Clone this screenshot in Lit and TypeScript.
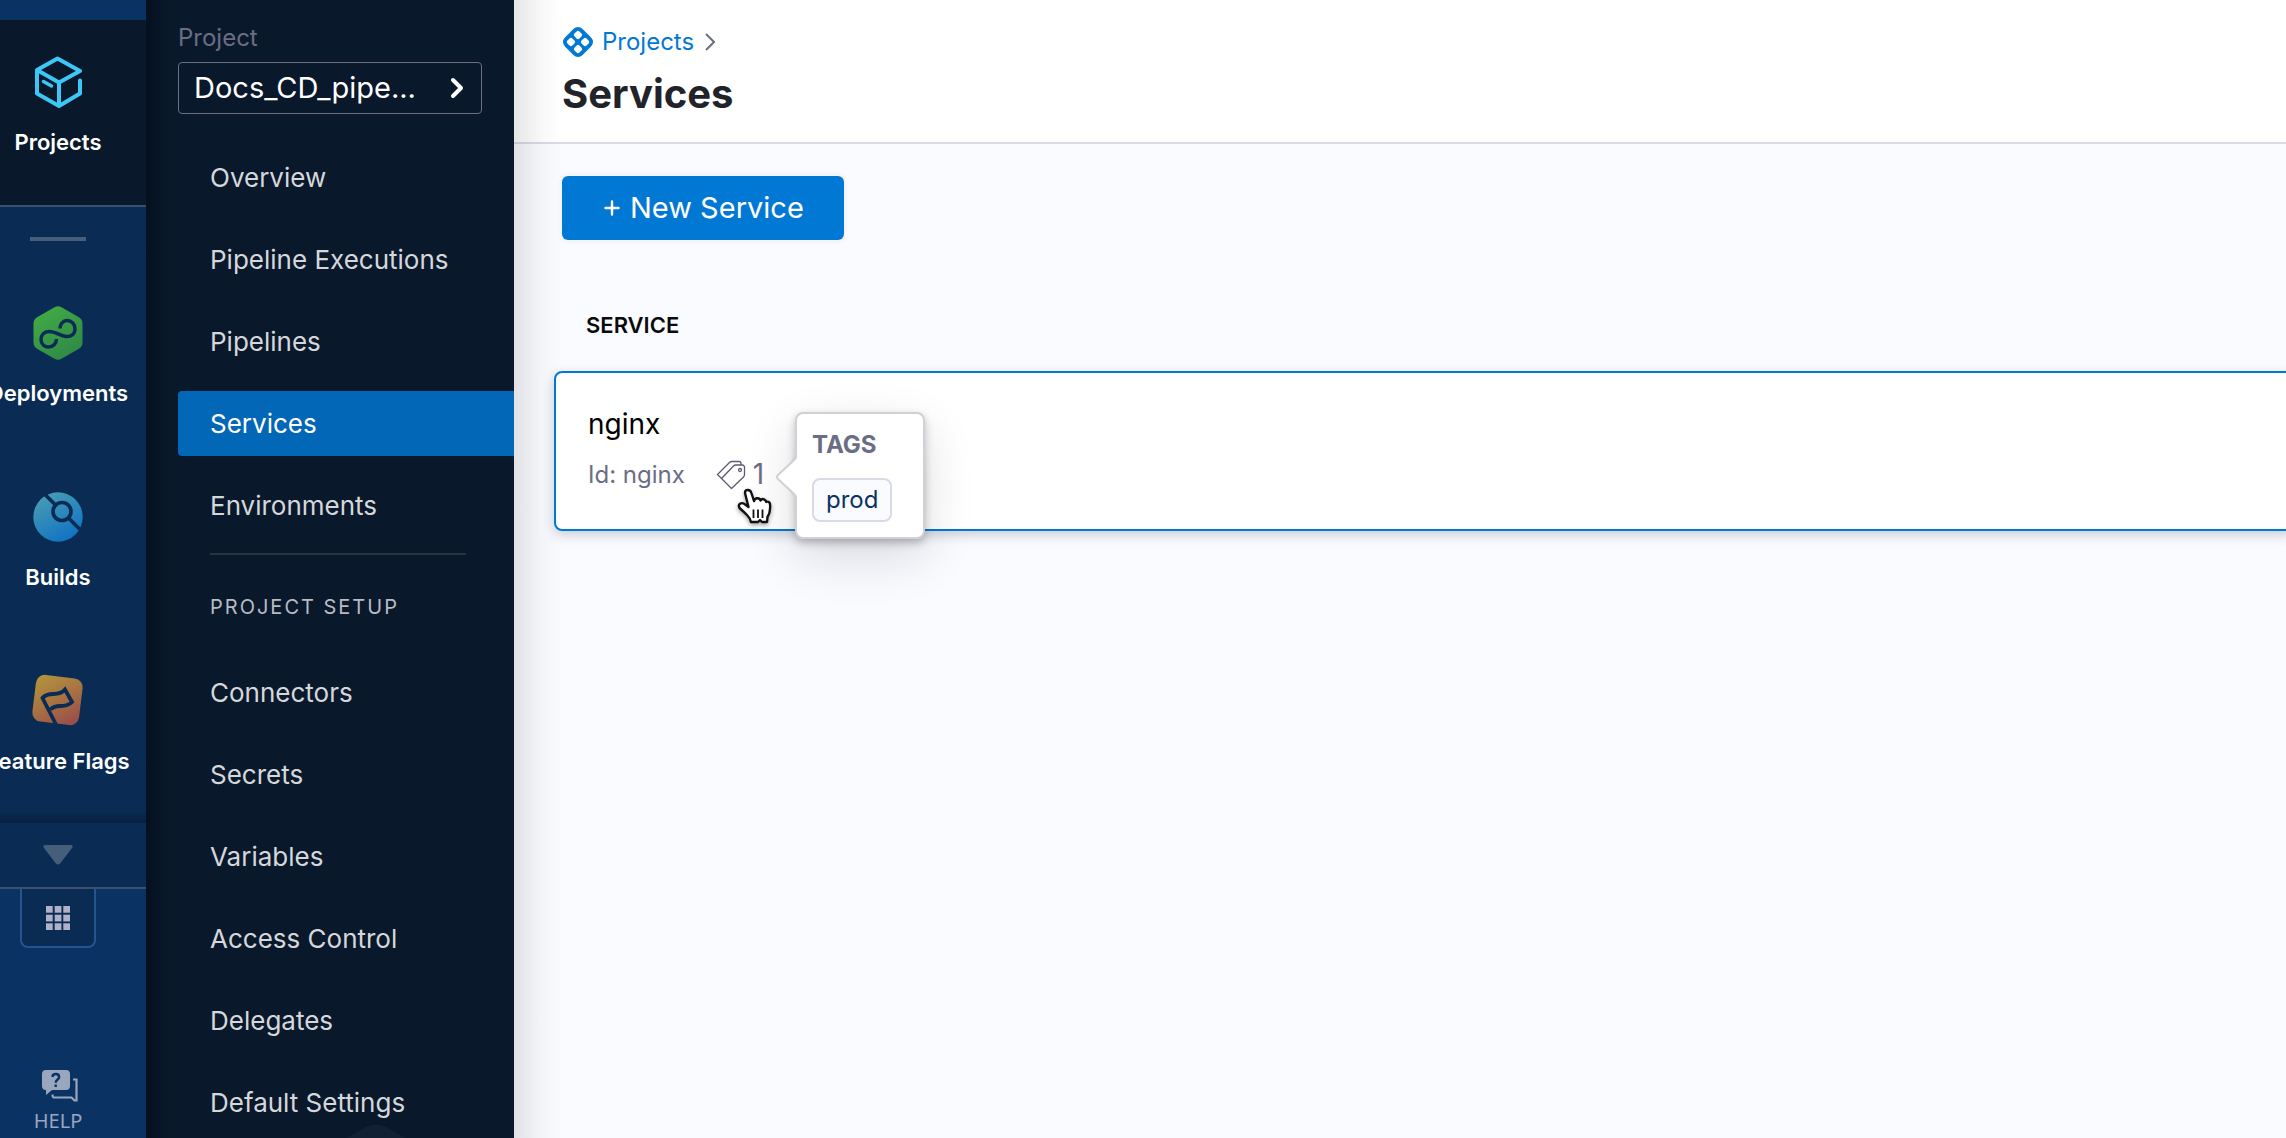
import { LitElement, html, svg, css, nothing } from "lit";
import { customElement } from "lit/decorators.js";
import { classMap } from "lit/directives/class-map.js";

const cubeIcon = html`<svg class="icon" viewBox="0 0 56 56" fill="none" stroke="#3dc7f6" stroke-width="4" stroke-linejoin="round" stroke-linecap="round" aria-hidden="true">
  <path d="M50 17 27.500 4.500 7 16v23.500L29 52l21-12.500V26.500M50 17 29 28.500 7 16M29 28.500V52"/>
  <path d="M13.500 27.500 21.500 32" stroke-width="3.500"/>
</svg>`;

const deployIcon = html`<svg class="icon" viewBox="0 0 56 56" aria-hidden="true">
  <defs><linearGradient id="g" x1="0.2" y1="0" x2="0.8" y2="1"><stop offset="0" stop-color="#42ab45"/><stop offset="1" stop-color="#2f8747"/></linearGradient></defs>
  <path fill="url(#g)" d="M24.500 2.200q3.500-2 7 0l17 9.800q4 2.300 4 6.500v19q0 4.200-4 6.500l-17 9.800q-3.500 2-7 0L7.500 44q-4-2.300-4-6.500v-19q0-4.200 4-6.500Z"/>
  <path fill="none" stroke="#0a2c54" stroke-width="3.400" d="M30 23.500C30 19 33 15.500 37 15.500a8 8 0 0 1 8 8.500c0 5-4 8-9 7.500-6-.6-10-5-17-5-5 0-8 3.500-8 8s3.500 7.500 7.500 7.500c4.500 0 8-3.500 8-8"/>
</svg>`;

const buildsIcon = html`<svg class="icon" viewBox="0 0 56 56" aria-hidden="true">
  <defs><linearGradient id="b" x1="0.2" y1="0.1" x2="0.7" y2="1"><stop offset="0" stop-color="#459ab5"/><stop offset="1" stop-color="#0f72c4"/></linearGradient></defs>
  <circle cx="28" cy="28" r="24.700" fill="url(#b)"/>
  <g fill="none" stroke="#0a2c54" stroke-width="3.600"><circle cx="32" cy="22.500" r="9"/><path d="M26 16.500 13.500 4M38 28.500 53 43.500"/></g>
</svg>`;

const flagsIcon = html`<svg class="icon" viewBox="0 0 56 56" aria-hidden="true">
  <defs><linearGradient id="f" x1="0.1" y1="0" x2="0.8" y2="1"><stop offset="0" stop-color="#b3943c"/><stop offset="0.5" stop-color="#a87442"/><stop offset="1" stop-color="#9a4e49"/></linearGradient></defs>
  <rect x="4" y="3.500" width="47" height="47" rx="9" fill="url(#f)" transform="rotate(7 27.500 27)"/>
  <path fill="none" stroke="#0a2c54" stroke-width="3.800" d="M26.500 52.500 12.500 25c3-3.500 6-4 11-4 5.500 0 9-1.500 11.500-4.500l7 12.500c-3 3.200-6.500 4-11.500 4-4.500 0-7.500.8-10 3.500"/>
</svg>`;

const rail = [
  { label: "Deployments", icon: deployIcon },
  { label: "Builds", icon: buildsIcon },
  { label: "Feature Flags", icon: flagsIcon },
];

@customElement("app-rail")
class AppRail extends LitElement {
  static styles = css`
    :host { display: flex; flex-direction: column; width: 176px; margin-left: -30px; flex: none; background: #0a3364; color: #fff; overflow: hidden; }
    a { color: inherit; text-decoration: none; }
    .item { display: flex; flex-direction: column; align-items: center; gap: 19px; font-size: 22px; line-height: 26px; font-weight: 600; white-space: nowrap; }
    .icon { width: 56px; height: 56px; display: block; }
    .active { margin-top: 20px; padding: 34px 0 50px; background: #09192b; border-bottom: 2px solid #3b506e; }
    .modules { display: flex; flex-direction: column; align-items: center; gap: 83px; padding: 30px 0 49px;
      background: linear-gradient(0deg, #071f3f, #0a2c54 12px); }
    .bar { width: 56px; height: 4px; margin-bottom: -19px; background: #475e7b; }
    .more { border: 0; padding: 22px 0; background: #0a2c54; border-bottom: 2px solid #3b506e; display: flex; justify-content: center; }
    .more svg { width: 30px; height: 20px; display: block; }
    .grid { align-self: center; width: 76px; height: 59px; padding: 0; display: grid; place-items: center; border: 2px solid #255590; border-top: 0; border-radius: 0 0 8px 8px; background: #0a2c54; }
    .grid svg { width: 24px; height: 24px; }
    .help { margin-top: auto; padding-bottom: 4px; display: flex; flex-direction: column; align-items: center; gap: 5px; color: #9aa5be; font: 20px/26px "Noto Sans", "Open Sans", sans-serif; }
    .help svg { width: 38px; height: 34px; margin-left: 4px; display: block; }
  `;

  render() {
    return html`
      <a class="item active" href="#projects">${cubeIcon}<span>Projects</span></a>
      <div class="modules">
        <div class="bar"></div>
        ${rail.map((m) => html`<a class="item" href="#modules">${m.icon}<span>${m.label}</span></a>`)}
      </div>
      <button class="more" type="button" aria-label="More modules">
        <svg viewBox="0 0 30 20"><path d="M3 0h24q4 0 2 3L17.500 18q-2.500 3-5 0L1 3q-2-3 2-3Z" fill="#475e7b"/></svg>
      </button>
      <button class="grid" type="button" aria-label="All modules">
        <svg viewBox="0 0 24 24" fill="#b0b1c9">
          ${[0, 8.7, 17.3].map((y) => [0, 8.7, 17.3].map((x) => svg`<rect x=${x} y=${y} width="6.700" height="6.700"/>`))}
        </svg>
      </button>
      <a class="help" href="#help">
        <svg viewBox="0 0 38 34" aria-hidden="true">
          <path fill="currentColor" d="M5 1h20q4 0 4 4v12q0 4-4 4H11l-6 5v-5q-4 0-4-4V5q0-4 4-4Z"/>
          <path fill="none" stroke="#0a3364" stroke-width="2.400" d="M11.500 8q0-3 3.300-3t3.300 3q0 1.500-1.700 2.700t-1.700 3M14.700 15.500v2.600"/>
          <path fill="none" stroke="currentColor" stroke-width="2.200" d="M32 10.500h3.500v21h-2l-3-3H13q-1.500 0-1.500-3"/>
        </svg>
        <span>HELP</span>
      </a>
    `;
  }
}

const mainNav = ["Overview", "Pipeline Executions", "Pipelines", "Services", "Environments"];
const setupNav = ["Connectors", "Secrets", "Variables", "Access Control", "Delegates", "Default Settings"];

@customElement("app-sidenav")
class AppSidenav extends LitElement {
  static styles = css`
    :host { position: relative; display: block; width: 368px; flex: none; box-sizing: border-box; padding: 24px 0 0 32px; overflow: hidden; color: #d5d7db;
      background: linear-gradient(90deg, #04101f, #09192b 24px); }
    .caption { display: block; font-size: 24px; line-height: 28px; color: #6b6d85; }
    .picker { display: flex; align-items: center; justify-content: space-between; width: 304px; height: 52px; box-sizing: border-box; margin: 10px 0 31px; padding: 0 17px 0 15px; border: 1px solid #6b6d85; border-radius: 4px; background: none; color: #fff; font: 29px/34px Inter, sans-serif; }
    .picker svg { width: 14px; height: 22px; }
    ul { list-style: none; margin: 0; padding: 0; display: flex; flex-direction: column; gap: 17px; }
    a { display: block; padding-left: 32px; font-size: 26px; line-height: 65px; border-radius: 4px 0 0 4px; color: inherit; text-decoration: none; }
    .current { background: #0267b6; color: #fff; }
    hr { margin: 15px 48px 40px 32px; border: 0; height: 2px; background: #27343f; }
    h2 { margin: 0 0 41px 32px; font-size: 20px; line-height: 24px; font-weight: 400; letter-spacing: 2px; color: #b8bbc3; }
    .hint { position: absolute; left: 196px; bottom: 0; width: 68px; height: 14px; }
  `;

  private list(items: string[]) {
    return html`<ul>${items.map((t) => html`<li><a href="#nav" class=${classMap({ current: t === "Services" })} aria-current=${t === "Services" ? "page" : nothing}>${t}</a></li>`)}</ul>`;
  }

  render() {
    return html`
      <label class="caption" for="project">Project</label>
      <button class="picker" id="project" type="button">
        <span>Docs_CD_pipe...</span>
        <svg viewBox="0 0 14 22" fill="none" stroke="#fff" stroke-width="4" stroke-linecap="round" stroke-linejoin="round"><path d="M3 3l8 8-8 8"/></svg>
      </button>
      <nav>
        ${this.list(mainNav)}
        <hr>
        <h2>PROJECT SETUP</h2>
        ${this.list(setupNav)}
      </nav>
      <svg class="hint" viewBox="0 0 68 14" aria-hidden="true"><path d="M4 14 24 3q10-5 20 0L64 14Z" fill="#122033"/></svg>
    `;
  }
}

@customElement("app-root")
class AppRoot extends LitElement {
  static styles = css`
    :host { display: flex; height: 100vh; overflow: hidden; font-family: Inter, "Liberation Sans", sans-serif; background: #fafbff; }
    main { position: relative; flex: 1; min-width: 0; overflow: hidden; }
    .edge { position: absolute; inset: 0 auto 0 0; width: 48px; pointer-events: none; background: linear-gradient(90deg, rgba(20, 24, 32, 0.11), rgba(20, 24, 32, 0.03) 55%, transparent); }
    header { padding: 25px 48px 18px; background: #fff; border-bottom: 2px solid #d9dae6; }
    .crumbs { display: flex; align-items: center; font-size: 24px; line-height: 34px; }
    .crumbs a { display: flex; align-items: center; gap: 8px; color: #0278d5; text-decoration: none; }
    .logo { width: 32px; height: 32px; }
    .chev { width: 10px; height: 18px; margin-left: 11px; }
    h1 { margin: 5px 0 0; font-size: 40px; line-height: 60px; font-weight: 700; color: #22222a; }
    .body { padding: 32px 0 0 40px; }
    .new { display: flex; align-items: center; gap: 10px; height: 64px; margin-left: 8px; padding: 0 40px 0 42px; border: 0; border-radius: 6px; background: #0278d5; color: #fff; font: 29px/34px Inter, sans-serif; box-shadow: 0 0 6px rgba(40, 41, 61, 0.08); }
    .new svg { width: 16px; height: 16px; }
    .head { margin: 72px 0 0 32px; font-size: 22px; line-height: 26px; font-weight: 600; color: #0b0b0d; }
    .card { position: relative; margin: 33px -8px 0 0; padding: 34px 0 33px 32px; border: 2px solid #0278d5; border-radius: 8px; background: #fff; box-shadow: 0 4px 12px rgba(40, 41, 61, 0.22); }
    .name { font-size: 28px; line-height: 34px; color: #000; }
    .meta { display: flex; align-items: center; margin-top: 12px; line-height: 43px; font-size: 24px; color: #6b6d85; }
    .tags { display: flex; align-items: center; gap: 7px; margin-left: 31px; font-size: 28px; }
    .tags svg { width: 30px; height: 30px; }
    .cursor { position: absolute; left: 181px; top: 115px; width: 36px; height: 40px; filter: drop-shadow(0 2px 2px rgba(0, 0, 0, 0.35)); }
    .pop { position: absolute; left: 239px; top: 39px; width: 130px; box-sizing: border-box; padding: 17px 15px 15px; border: 2px solid #d0d0d6; border-radius: 8px; background: #fff; box-shadow: 0 4px 8px rgba(20, 20, 30, 0.25), 0 18px 50px rgba(20, 20, 30, 0.14); display: flex; flex-direction: column; align-items: flex-start; gap: 19px; }
    .pop h3 { margin: 0; font-size: 24px; line-height: 28px; font-weight: 700; color: #6b6d85; }
    .tag { padding: 0 12px; font-size: 24px; line-height: 40px; border: 2px solid #d9dae6; border-radius: 8px; background: #fafbff; color: #0a3364; }
    .arrow { position: absolute; left: -22px; top: 37px; width: 24px; height: 52px; }
  `;

  render() {
    return html`
      <app-rail></app-rail>
      <app-sidenav></app-sidenav>
      <main>
        <header>
          <div class="crumbs">
            <a href="#projects">
              <svg class="logo" viewBox="0 0 32 32" aria-hidden="true">
                <g transform="rotate(45 16 16)"><rect x="3.500" y="3.500" width="25" height="25" rx="6.500" fill="#0278d5"/>
                <g fill="#fff"><rect x="7.500" y="7.500" width="7" height="7" rx="2"/><rect x="17.500" y="7.500" width="7" height="7" rx="2"/><rect x="7.500" y="17.500" width="7" height="7" rx="2"/><rect x="17.500" y="17.500" width="7" height="7" rx="2"/></g></g>
              </svg>
              Projects</a>
            <svg class="chev" viewBox="0 0 10 18" fill="none" stroke="#6b6d85" stroke-width="2"><path d="M1 1l8 8-8 8"/></svg>
          </div>
          <h1>Services</h1>
        </header>
        <div class="body">
          <button class="new" type="button">
            <svg viewBox="0 0 16 16" stroke="#fff" stroke-width="2.400" stroke-linecap="round"><path d="M8 1.500v13M1.500 8h13"/></svg>
            <span>New Service</span>
          </button>
          <div class="head">SERVICE</div>
          <div class="card">
            <div class="name">nginx</div>
            <div class="meta">
              <span>Id: nginx</span>
              <span class="tags">
                <svg viewBox="0 0 30 30" fill="none" stroke="#5a5b70" stroke-width="1.300" stroke-linejoin="round" aria-hidden="true">
                  <path d="M5.500 18.500 1.500 14.500 13.500 2.500q1-1 2.500-1h7q2 0 2 2v1.500"/>
                  <path d="M5.500 18.500 17.500 6q1-1 2.500-1h7l1.500 1.500v8q0 1.500-1 2.500L15.500 28.500Z"/>
                  <circle cx="24" cy="10" r="1.500"/>
                </svg>
                <span>1</span>
              </span>
            </div>
            <div class="pop">
              <svg class="arrow" viewBox="0 0 24 52" aria-hidden="true"><path d="M24 0C24 8 18 12 4 23q-4 3 0 6c14 11 20 15 20 23" fill="#fff"/><path d="M21 3C20 9 15 13 4 23q-4 3 0 6c11 10 16 14 17 20" fill="none" stroke="#d0d0d6" stroke-width="2"/></svg>
              <h3>TAGS</h3>
              <span class="tag">prod</span>
            </div>
            <svg class="cursor" viewBox="0 0 36 40" aria-hidden="true">
              <path fill="#fff" stroke="#111" stroke-width="2.400" stroke-linejoin="round" d="M8 5q0-3 2.800-3t3.600 3l2.600 8q1-3 3.500-2.800t3 2.300q1.500-2 3.500-1.200t2.300 2.700q2.200-1 3.200.7t.5 6.300q0 4-2.500 8l-.5 5h-5l-2-2-2 2h-7q-1-4-4-7T2.500 20q-1.500-3 .5-4.300t4.500.3l4 3Z"/>
              <path stroke="#111" stroke-width="1.800" d="M16.500 21.500v8.500M21 21.500v8.500M25.500 21.500v8.500"/>
            </svg>
          </div>
        </div>
        <div class="edge"></div>
      </main>
    `;
  }
}
